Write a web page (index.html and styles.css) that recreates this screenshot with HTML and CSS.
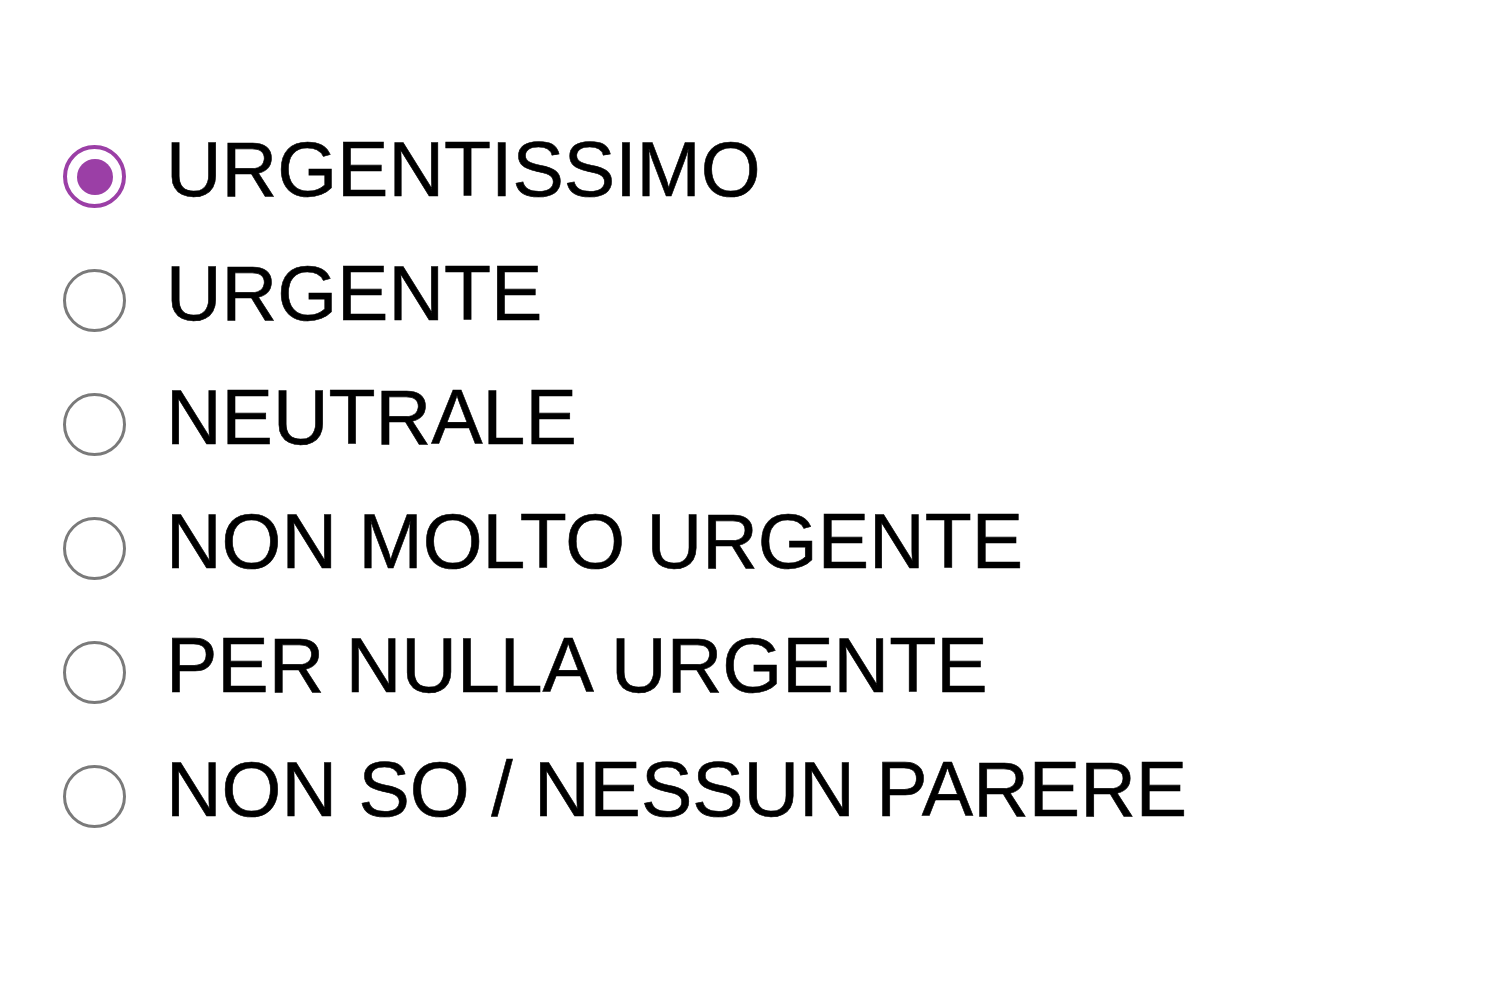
FILE: index.html
```html
<!DOCTYPE html>
<html lang="it">
<head>
<meta charset="utf-8">
<title>Urgenza</title>
<link rel="stylesheet" href="styles.css">
</head>
<body>
<div class="options">
  <label class="option"><span class="radio checked"><span class="dot"></span></span><span class="label">URGENTISSIMO</span></label>
  <label class="option"><span class="radio"></span><span class="label">URGENTE</span></label>
  <label class="option"><span class="radio"></span><span class="label">NEUTRALE</span></label>
  <label class="option"><span class="radio"></span><span class="label">NON MOLTO URGENTE</span></label>
  <label class="option"><span class="radio"></span><span class="label">PER NULLA URGENTE</span></label>
  <label class="option"><span class="radio"></span><span class="label">NON SO / NESSUN PARERE</span></label>
</div>
</body>
</html>
```
FILE: styles.css
```css
html, body {
  margin: 0;
  padding: 0;
  background: #ffffff;
}
body {
  font-family: "Liberation Sans", Arial, sans-serif;
  color: #000000;
}
.options {
  display: flex;
  flex-direction: column;
  padding: 107px 0 0 63px;
}
.option {
  display: flex;
  align-items: flex-start;
  height: 124px;
  gap: 40px;
}
.radio {
  box-sizing: border-box;
  width: 63px;
  height: 63px;
  margin-top: 38px;
  border: 3px solid #7a7a7a;
  border-radius: 50%;
  display: flex;
  align-items: center;
  justify-content: center;
  flex: none;
}
.radio.checked {
  border: 4px solid #9b3fa6;
}
.dot {
  width: 36px;
  height: 36px;
  border-radius: 50%;
  background: #9b3fa6;
}
.label {
  font-size: 77px;
  line-height: 124px;
  white-space: nowrap;
  -webkit-text-stroke: 0.6px #000000;
}
```
